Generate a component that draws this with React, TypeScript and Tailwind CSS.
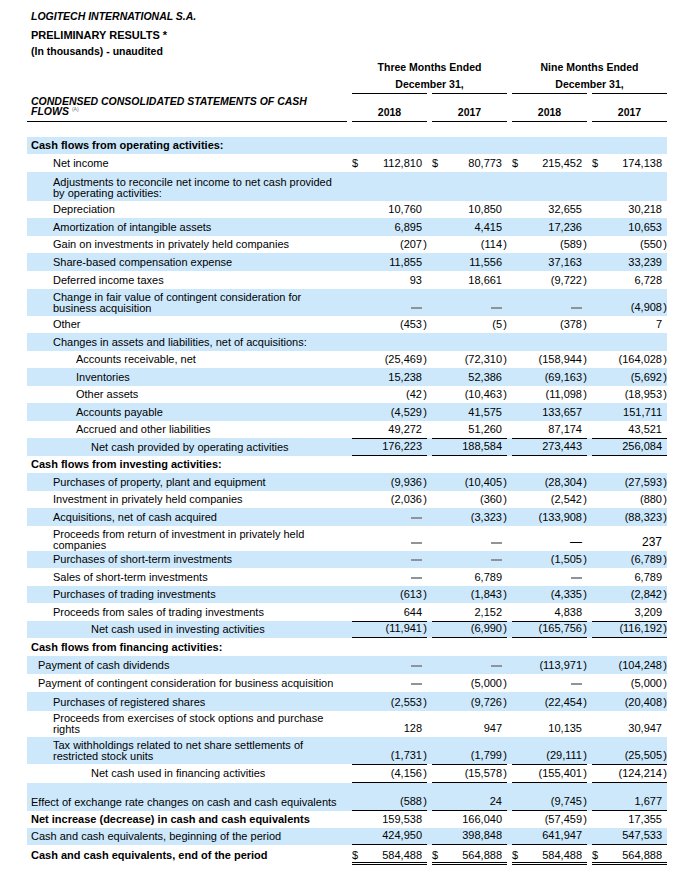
type Row = {
  label: string[];
  pad: string;
  h: string;
  bold?: boolean;
  vals?: string[];
  dollar?: boolean;
  line?: string;
  lpb?: string;
  vpb?: string;
};

const OP = "pl-[26px]";
const SUB = "pl-[49px]";
const TOT = "pl-[64px]";
const TOP = "pl-[4px]";
const TOTAL_LINE = "border-t border-b border-black";

const rows: Row[] = [
  { label: ["Cash flows from operating activities:"], pad: TOP, h: "h-[17px]", bold: true },
  { label: ["Net income"], pad: OP, h: "h-[18px]", dollar: true, vals: ["112,810", "80,773", "215,452", "174,138"] },
  { label: ["Adjustments to reconcile net income to net cash provided", "by operating activities:"], pad: OP, h: "h-[29px]" },
  { label: ["Depreciation"], pad: OP, h: "h-[17px]", vals: ["10,760", "10,850", "32,655", "30,218"] },
  { label: ["Amortization of intangible assets"], pad: OP, h: "h-[18px]", vals: ["6,895", "4,415", "17,236", "10,653"] },
  { label: ["Gain on investments in privately held companies"], pad: OP, h: "h-[17px]", vals: ["(207)", "(114)", "(589)", "(550)"] },
  { label: ["Share-based compensation expense"], pad: OP, h: "h-[18px]", vals: ["11,855", "11,556", "37,163", "33,239"] },
  { label: ["Deferred income taxes"], pad: OP, h: "h-[18px]", vals: ["93", "18,661", "(9,722)", "6,728"] },
  { label: ["Change in fair value of contingent consideration for", "business acquisition"], pad: OP, h: "h-[27px]", vals: ["-", "-", "-", "(4,908)"] },
  { label: ["Other"], pad: OP, h: "h-[17px]", vals: ["(453)", "(5)", "(378)", "7"] },
  { label: ["Changes in assets and liabilities, net of acquisitions:"], pad: OP, h: "h-[18px]" },
  { label: ["Accounts receivable, net"], pad: SUB, h: "h-[17px]", vals: ["(25,469)", "(72,310)", "(158,944)", "(164,028)"] },
  { label: ["Inventories"], pad: SUB, h: "h-[18px]", vals: ["15,238", "52,386", "(69,163)", "(5,692)"] },
  { label: ["Other assets"], pad: SUB, h: "h-[17px]", vals: ["(42)", "(10,463)", "(11,098)", "(18,953)"] },
  { label: ["Accounts payable"], pad: SUB, h: "h-[18px]", vals: ["(4,529)", "41,575", "133,657", "151,711"] },
  { label: ["Accrued and other liabilities"], pad: SUB, h: "h-[17px]", vals: ["49,272", "51,260", "87,174", "43,521"] },
  { label: ["Net cash provided by operating activities"], pad: TOT, h: "h-[18px]", line: TOTAL_LINE, vals: ["176,223", "188,584", "273,443", "256,084"] },
  { label: ["Cash flows from investing activities:"], pad: TOP, h: "h-[17px]", bold: true },
  { label: ["Purchases of property, plant and equipment"], pad: OP, h: "h-[18px]", vals: ["(9,936)", "(10,405)", "(28,304)", "(27,593)"] },
  { label: ["Investment in privately held companies"], pad: OP, h: "h-[17px]", vals: ["(2,036)", "(360)", "(2,542)", "(880)"] },
  { label: ["Acquisitions, net of cash acquired"], pad: OP, h: "h-[18px]", vals: ["-", "(3,323)", "(133,908)", "(88,323)"] },
  { label: ["Proceeds from return of investment in privately held", "companies"], pad: OP, h: "h-[25px]", lpb: "pb-[1px]", vals: ["-", "-", "—", "237"] },
  { label: ["Purchases of short-term investments"], pad: OP, h: "h-[17px]", vals: ["-", "-", "(1,505)", "(6,789)"] },
  { label: ["Sales of short-term investments"], pad: OP, h: "h-[18px]", vals: ["-", "6,789", "-", "6,789"] },
  { label: ["Purchases of trading investments"], pad: OP, h: "h-[17px]", vals: ["(613)", "(1,843)", "(4,335)", "(2,842)"] },
  { label: ["Proceeds from sales of trading investments"], pad: OP, h: "h-[18px]", vals: ["644", "2,152", "4,838", "3,209"] },
  { label: ["Net cash used in investing activities"], pad: TOT, h: "h-[17px]", line: TOTAL_LINE, vals: ["(11,941)", "(6,990)", "(165,756)", "(116,192)"] },
  { label: ["Cash flows from financing activities:"], pad: TOP, h: "h-[18px]", bold: true },
  { label: ["Payment of cash dividends"], pad: "pl-[11px]", h: "h-[18px]", vals: ["-", "-", "(113,971)", "(104,248)"] },
  { label: ["Payment of contingent consideration for business acquisition"], pad: "pl-[11px]", h: "h-[18px]", vals: ["-", "(5,000)", "-", "(5,000)"] },
  { label: ["Purchases of registered shares"], pad: OP, h: "h-[19px]", vals: ["(2,553)", "(9,726)", "(22,454)", "(20,408)"] },
  { label: ["Proceeds from exercises of stock options and purchase", "rights"], pad: OP, h: "h-[26px]", vals: ["128", "947", "10,135", "30,947"] },
  { label: ["Tax withholdings related to net share settlements of", "restricted stock units"], pad: OP, h: "h-[27px]", vals: ["(1,731)", "(1,799)", "(29,111)", "(25,505)"] },
  { label: ["Net cash used in financing activities"], pad: TOT, h: "h-[19px]", lpb: "pb-[4px]", line: TOTAL_LINE, vals: ["(4,156)", "(15,578)", "(155,401)", "(124,214)"] },
  { label: ["Effect of exchange rate changes on cash and cash equivalents"], pad: TOP, h: "h-[28px]", line: "border-b border-black", vals: ["(588)", "24", "(9,745)", "1,677"] },
  { label: ["Net increase (decrease) in cash and cash equivalents"], pad: TOP, h: "h-[17px]", bold: true, vals: ["159,538", "166,040", "(57,459)", "17,355"] },
  { label: ["Cash and cash equivalents, beginning of the period"], pad: TOP, h: "h-[17px]", line: "border-b border-black", vals: ["424,950", "398,848", "641,947", "547,533"] },
  { label: ["Cash and cash equivalents, end of the period"], pad: TOP, h: "h-[20px]", bold: true, dollar: true, lpb: "pb-[4px]", vpb: "pb-[1px]", line: "border-b-[3px] border-double border-black", vals: ["584,488", "564,888", "584,488", "564,888"] },
];

function Amount({ v }: { v: string }) {
  if (v === "-") {
    return (
      <>
        <span className="mb-[4px] h-[2px] w-[11px] bg-[#8f949a]" />
        <span className="w-[5px]" />
      </>
    );
  }
  if (v === "—" || v === "237") {
    return (
      <>
        <span className="text-[12px] leading-[11px]">{v}</span>
        <span className="w-[5px]" />
      </>
    );
  }
  if (v.startsWith("(")) {
    return (
      <>
        <span>{v.slice(0, -1)}</span>
        <span className="w-[5px] text-right">)</span>
      </>
    );
  }
  return (
    <>
      <span>{v}</span>
      <span className="w-[5px]" />
    </>
  );
}

export default function App() {
  return (
    <div className="min-h-[878px] bg-white font-['Liberation_Sans',Arial,sans-serif] text-black">
      <div className="ml-[27px] w-[640px] pt-[9px]">
        <div className="h-[14px] pl-[4px] text-[10.5px] font-bold italic leading-[14px]">LOGITECH INTERNATIONAL S.A.</div>
        <div className="mt-[5px] h-[14px] pl-[4px] text-[11px] font-bold leading-[14px]">PRELIMINARY RESULTS *</div>
        <div className="mt-[2px] h-[14px] pl-[4px] text-[10.5px] font-bold leading-[14px]">(In thousands) - unaudited</div>

        <div className="grid grid-cols-[320px_80px_80px_80px_80px] text-[10.5px] font-bold">
          <div className="h-[18px]" />
          <div className="col-span-2 h-[18px] pl-[5px] text-center leading-[18px]">Three Months Ended</div>
          <div className="col-span-2 h-[18px] pl-[5px] text-center leading-[18px]">Nine Months Ended</div>

          <div className="h-[18px]" />
          {[0, 1].map((k) => (
            <div key={k} className="col-span-2 flex h-[18px] flex-col">
              <div className="h-[17px] pl-[5px] text-center leading-[17px]">December 31,</div>
              <div className="flex">
                <div className="ml-[5px] w-[75px] border-b border-black" />
                <div className="ml-[5px] w-[75px] border-b border-black" />
              </div>
            </div>
          ))}

          <div className="flex h-[28px] items-end border-b border-black pb-[5px] pl-[4px] text-[10.5px] italic leading-[10px]">
            <div>
              <div>CONDENSED CONSOLIDATED STATEMENTS OF CASH</div>
              <div className="flex items-start">
                <span>FLOWS</span>
                <span className="ml-[3px] text-[5px] font-normal not-italic leading-[6px] text-gray-500">(A)</span>
              </div>
            </div>
          </div>
          {["2018", "2017", "2018", "2017"].map((y, i) => (
            <div key={i} className="h-[28px] pl-[5px]">
              <div className="flex h-full items-end justify-center border-b border-black pb-[3px] leading-[11px]">{y}</div>
            </div>
          ))}
        </div>

        <div className="mt-[15px] text-[11px] leading-[11px]">
          {rows.map((r, i) => (
            <div key={i} className={`flex ${r.h} ${i % 2 === 0 ? "bg-[#cde8fb]" : "bg-white"}`}>
              <div
                className={`flex w-[320px] items-end whitespace-nowrap ${r.pad} ${r.lpb ?? "pb-[3px]"} ${r.bold ? "font-bold" : ""} ${r.label.length > 1 ? "leading-[10.5px]" : ""}`}
              >
                <div>
                  {r.label.map((l, j) => (
                    <div key={j}>{l}</div>
                  ))}
                </div>
              </div>
              {r.vals &&
                r.vals.map((v, j) => (
                  <div key={j} className="w-[80px] pl-[5px]">
                    <div className={`flex h-full items-end justify-between ${r.vpb ?? "pb-[3px]"} ${r.line ?? ""}`}>
                      <span>{r.dollar ? "$" : ""}</span>
                      <span className="flex items-end">
                        <Amount v={v} />
                      </span>
                    </div>
                  </div>
                ))}
            </div>
          ))}
        </div>
      </div>
    </div>
  );
}
